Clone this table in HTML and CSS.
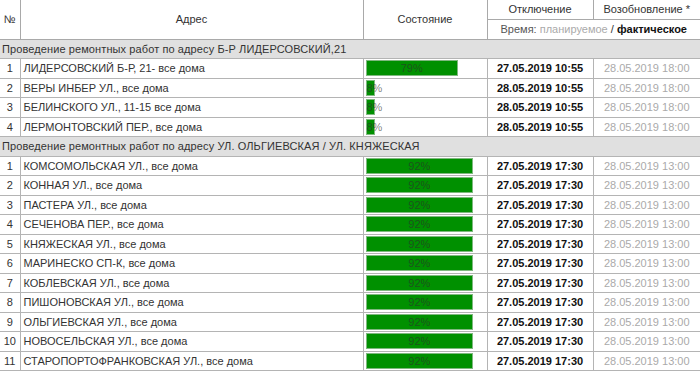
FILE: index.html
```html
<!DOCTYPE html>
<html lang="ru">
<head>
<meta charset="utf-8">
<title>Ремонтные работы</title>
<link rel="stylesheet" href="styles.css">
</head>
<body>
<table class="grid">
  <colgroup>
    <col class="c-num"><col class="c-addr"><col class="c-state"><col class="c-off"><col class="c-on">
  </colgroup>
  <thead>
    <tr class="h1">
      <th rowspan="2">№</th>
      <th rowspan="2">Адрес</th>
      <th rowspan="2">Состояние</th>
      <th>Отключение</th>
      <th>Возобновление *</th>
    </tr>
    <tr class="h2">
      <th colspan="2"><span class="lbl">Время:</span> <span class="plan">планируемое</span> / <b>фактическое</b></th>
    </tr>
  </thead>
  <tbody>
    <tr class="group"><td colspan="5">Проведение ремонтных работ по адресу Б-Р ЛИДЕРСОВСКИЙ,21</td></tr>
    <tr><td class="num">1</td><td class="addr">ЛИДЕРСОВСКИЙ Б-Р, 21- все дома</td><td class="state"><div class="track"><div class="bar" style="width:79%">79%</div></div></td><td class="off">27.05.2019 10:55</td><td class="on">28.05.2019 18:00</td></tr>
    <tr><td class="num">2</td><td class="addr">ВЕРЫ ИНБЕР УЛ., все дома</td><td class="state"><div class="track"><div class="bar" style="width:8%">8%</div></div></td><td class="off">28.05.2019 10:55</td><td class="on">28.05.2019 18:00</td></tr>
    <tr><td class="num">3</td><td class="addr">БЕЛИНСКОГО УЛ., 11-15 все дома</td><td class="state"><div class="track"><div class="bar" style="width:8%">8%</div></div></td><td class="off">28.05.2019 10:55</td><td class="on">28.05.2019 18:00</td></tr>
    <tr><td class="num">4</td><td class="addr">ЛЕРМОНТОВСКИЙ ПЕР., все дома</td><td class="state"><div class="track"><div class="bar" style="width:8%">8%</div></div></td><td class="off">28.05.2019 10:55</td><td class="on">28.05.2019 18:00</td></tr>
    <tr class="group"><td colspan="5">Проведение ремонтных работ по адресу УЛ. ОЛЬГИЕВСКАЯ / УЛ. КНЯЖЕСКАЯ</td></tr>
    <tr><td class="num">1</td><td class="addr">КОМСОМОЛЬСКАЯ УЛ., все дома</td><td class="state"><div class="track"><div class="bar" style="width:92%">92%</div></div></td><td class="off">27.05.2019 17:30</td><td class="on">28.05.2019 13:00</td></tr>
    <tr><td class="num">2</td><td class="addr">КОННАЯ УЛ., все дома</td><td class="state"><div class="track"><div class="bar" style="width:92%">92%</div></div></td><td class="off">27.05.2019 17:30</td><td class="on">28.05.2019 13:00</td></tr>
    <tr><td class="num">3</td><td class="addr">ПАСТЕРА УЛ., все дома</td><td class="state"><div class="track"><div class="bar" style="width:92%">92%</div></div></td><td class="off">27.05.2019 17:30</td><td class="on">28.05.2019 13:00</td></tr>
    <tr><td class="num">4</td><td class="addr">СЕЧЕНОВА ПЕР., все дома</td><td class="state"><div class="track"><div class="bar" style="width:92%">92%</div></div></td><td class="off">27.05.2019 17:30</td><td class="on">28.05.2019 13:00</td></tr>
    <tr><td class="num">5</td><td class="addr">КНЯЖЕСКАЯ УЛ., все дома</td><td class="state"><div class="track"><div class="bar" style="width:92%">92%</div></div></td><td class="off">27.05.2019 17:30</td><td class="on">28.05.2019 13:00</td></tr>
    <tr><td class="num">6</td><td class="addr">МАРИНЕСКО СП-К, все дома</td><td class="state"><div class="track"><div class="bar" style="width:92%">92%</div></div></td><td class="off">27.05.2019 17:30</td><td class="on">28.05.2019 13:00</td></tr>
    <tr><td class="num">7</td><td class="addr">КОБЛЕВСКАЯ УЛ., все дома</td><td class="state"><div class="track"><div class="bar" style="width:92%">92%</div></div></td><td class="off">27.05.2019 17:30</td><td class="on">28.05.2019 13:00</td></tr>
    <tr><td class="num">8</td><td class="addr">ПИШОНОВСКАЯ УЛ., все дома</td><td class="state"><div class="track"><div class="bar" style="width:92%">92%</div></div></td><td class="off">27.05.2019 17:30</td><td class="on">28.05.2019 13:00</td></tr>
    <tr><td class="num">9</td><td class="addr">ОЛЬГИЕВСКАЯ УЛ., все дома</td><td class="state"><div class="track"><div class="bar" style="width:92%">92%</div></div></td><td class="off">27.05.2019 17:30</td><td class="on">28.05.2019 13:00</td></tr>
    <tr><td class="num">10</td><td class="addr">НОВОСЕЛЬСКАЯ УЛ., все дома</td><td class="state"><div class="track"><div class="bar" style="width:92%">92%</div></div></td><td class="off">27.05.2019 17:30</td><td class="on">28.05.2019 13:00</td></tr>
    <tr><td class="num">11</td><td class="addr">СТАРОПОРТОФРАНКОВСКАЯ УЛ., все дома</td><td class="state"><div class="track"><div class="bar" style="width:92%">92%</div></div></td><td class="off">27.05.2019 17:30</td><td class="on">28.05.2019 13:00</td></tr>
  </tbody>
</table>
</body>
</html>
```

FILE: styles.css
```css
html, body {
  margin: 0;
  padding: 0;
  background: #fff;
}
body {
  font-family: "Liberation Sans", Arial, sans-serif;
  font-size: 11px;
  color: #333;
}
.grid {
  width: 700px;
  border-collapse: collapse;
  table-layout: fixed;
}
.c-num { width: 20px; }
.c-addr { width: 343px; }
.c-state { width: 124px; }
.c-off { width: 106px; }
.c-on { width: 107px; }

.grid th, .grid td {
  padding: 0;
  border: 1px solid #a9a9a9;
  overflow: hidden;
  white-space: nowrap;
}
.grid th {
  font-weight: normal;
  text-align: center;
  color: #333;
  font-size: 11px;
}
.grid thead tr.h1 th { border-top: none; }
.grid th:first-child, .grid td:first-child { border-left: none; }
.grid th:last-child, .grid td:last-child { border-right: none; }
.grid thead tr.h2 th { border-right: none; }
.h1 { height: 19px; }
.h2 { height: 20px; }
.h2 .lbl { color: #555; }
.h2 .plan { color: #aaa; }
.h2 b { color: #111; }

.grid tbody tr { height: 19.5px; }
.grid tbody td { border-color: #b4b4b4; }
.group td {
  background: #e0e0e0;
  padding-left: 2px;
  color: #333;
  letter-spacing: 0.1px;
}
.num { text-align: center; }
.addr { padding-left: 3px !important; }
.state { padding: 0 2px !important; }
.track { width: 117px; }
.bar {
  box-sizing: border-box;
  height: 16px;
  line-height: 15px;
  background: #009000;
  border: 1px solid #7fb87f;
  color: rgba(45, 45, 45, 0.62);
  text-align: center;
  overflow: visible;
  white-space: nowrap;
}
.off {
  text-align: center;
  font-weight: bold;
  color: #111;
}
.on {
  text-align: center;
  color: #aaa;
}
```
